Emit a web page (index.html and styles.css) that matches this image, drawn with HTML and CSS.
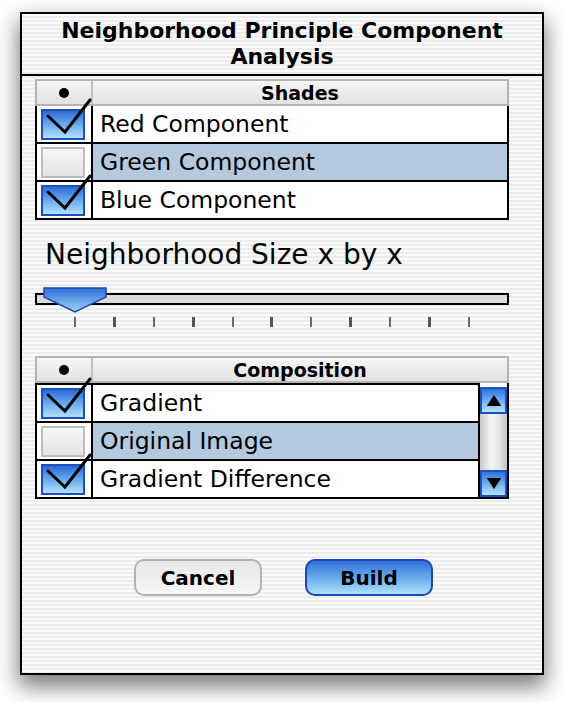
FILE: index.html
```html
<!DOCTYPE html>
<html>
<head>
<meta charset="utf-8">
<link rel="stylesheet" href="styles.css">
</head>
<body>
<div class="window">
  <div class="title">Neighborhood Principle Component<br>Analysis</div>
  <div class="content">
    <div class="table">
      <div class="thead">
        <div class="hcell c1"><span class="dot"></span></div>
        <div class="hcell c2">Shades</div>
      </div>
      <div class="row">
        <div class="cell c1"><span class="box on"></span><svg class="check" viewBox="0 0 50 40"><polyline points="6,17 23,33 48,1"/></svg></div>
        <div class="cell c2">Red Component</div>
      </div>
      <div class="row sel">
        <div class="cell c1"><span class="box"></span></div>
        <div class="cell c2">Green Component</div>
      </div>
      <div class="row">
        <div class="cell c1"><span class="box on"></span><svg class="check" viewBox="0 0 50 40"><polyline points="6,17 23,33 48,1"/></svg></div>
        <div class="cell c2">Blue Component</div>
      </div>
    </div>

    <div class="label">Neighborhood Size x by x</div>

    <div class="slider">
      <div class="track"></div>
      <svg class="thumb" viewBox="0 0 64 26"><defs><linearGradient id="tg" x1="0" y1="0" x2="0" y2="1"><stop offset="0" stop-color="#2f6fd8"/><stop offset="1" stop-color="#9fd4f8"/></linearGradient></defs><polygon points="1,1 63,1 63,10 32,25 1,10" fill="url(#tg)" stroke="#1d47b4" stroke-width="1.5"/></svg>
      <div class="ticks">
        <span></span><span></span><span></span><span></span><span></span><span></span><span></span><span></span><span></span><span></span><span></span>
      </div>
    </div>

    <div class="table t2">
      <div class="thead">
        <div class="hcell c1"><span class="dot"></span></div>
        <div class="hcell c2">Composition</div>
      </div>
      <div class="body2">
        <div class="rows">
          <div class="row">
            <div class="cell c1"><span class="box on"></span><svg class="check" viewBox="0 0 50 40"><polyline points="6,17 23,33 48,1"/></svg></div>
            <div class="cell c2">Gradient</div>
          </div>
          <div class="row sel">
            <div class="cell c1"><span class="box"></span></div>
            <div class="cell c2">Original Image</div>
          </div>
          <div class="row">
            <div class="cell c1"><span class="box on"></span><svg class="check" viewBox="0 0 50 40"><polyline points="6,17 23,33 48,1"/></svg></div>
            <div class="cell c2">Gradient Difference</div>
          </div>
        </div>
        <div class="scroll">
          <div class="arrow up"><svg viewBox="0 0 20 16"><polygon points="10,2 18,14 2,14"/></svg></div>
          <div class="strack"></div>
          <div class="arrow down"><svg viewBox="0 0 20 16"><polygon points="2,2 18,2 10,14"/></svg></div>
        </div>
      </div>
    </div>

    <div class="buttons">
      <div class="btn cancel">Cancel</div>
      <div class="btn build">Build</div>
    </div>
  </div>
</div>
</body>
</html>
```
FILE: styles.css
```css
html, body {
  margin: 0;
  padding: 0;
  background: #ffffff;
}
body {
  font-family: "DejaVu Sans", Verdana, sans-serif;
  color: #000;
  min-height: 702px;
  padding-top: 12px;
  box-sizing: border-box;
}
.window {
  margin: 0 0 0 20px;
  width: 520px;
  height: 659px;
  border: 2px solid #000;
  background: repeating-linear-gradient(to bottom, #fafafa 0px, #fafafa 2px, #ececec 2px, #ececec 4px);
  box-shadow: 0 10px 20px 2px rgba(0,0,0,0.5);
}
.title {
  border-bottom: 2px solid #000;
  text-align: center;
  font-weight: bold;
  font-size: 22px;
  line-height: 26px;
  padding-top: 4px;
  box-sizing: border-box;
  height: 62px;
}
.content {
  padding: 3px 0 0 13px;
}
.table {
  width: 474px;
  border: 2px solid #000;
  border-top: none;
  box-sizing: border-box;
}
.thead {
  display: flex;
  height: 27px;
  background: linear-gradient(#f6f6f6, #e2e2e2);
  border: 2px solid #b4b4b4;
  margin: 0 -2px;
  box-sizing: border-box;
}
.hcell {
  display: flex;
  align-items: center;
  justify-content: center;
  font-weight: bold;
  font-size: 19px;
}
.hcell.c1 {
  width: 54px;
  border-right: 2px solid #c0c0c0;
}
.hcell.c2 { flex: 1; }
.dot {
  width: 10px;
  height: 10px;
  border-radius: 50%;
  background: #000;
}
.row {
  display: flex;
  height: 38px;
  border-top: 2px solid #000;
  box-sizing: border-box;
  background: #fff;
}
.thead + .row { border-top: none; height: 36px; }
.cell {
  display: flex;
  align-items: center;
}
.cell.c1 {
  width: 54px;
  border-right: 2px solid #000;
  position: relative;
  justify-content: center;
}
.cell.c2 {
  flex: 1;
  font-size: 23.5px;
  padding-left: 7px;
}
.row.sel .c2 { background: #b4c8de; }
.box {
  width: 44px;
  height: 31px;
  box-sizing: border-box;
  border: 2px solid #bdbdbd;
  background: linear-gradient(#f6f6f6, #e4e4e4);
  margin-right: 2px;
}
.box.on {
  border-color: #1f4ec0;
  background: linear-gradient(#2d6bd8, #6fb0f0 55%, #b4e0fb);
}
.check {
  position: absolute;
  left: 5px;
  top: -7px;
  width: 50px;
  height: 40px;
  overflow: visible;
}
.check polyline {
  fill: none;
  stroke: #000;
  stroke-width: 3;
  stroke-linecap: round;
  stroke-linejoin: miter;
}
.label {
  font-size: 28px;
  margin: 16px 0 0 10px;
  line-height: 38px;
}
.slider {
  position: relative;
  width: 474px;
  height: 50px;
  margin-top: 13px;
}
.track {
  position: absolute;
  left: 0;
  top: 6px;
  width: 474px;
  height: 12px;
  box-sizing: border-box;
  border: 2px solid #000;
  background: #dcdcdc;
}
.thumb {
  position: absolute;
  left: 8px;
  top: 0;
  width: 64px;
  height: 26px;
}
.ticks {
  position: absolute;
  left: 39px;
  top: 30px;
  width: 396px;
  display: flex;
  justify-content: space-between;
}
.ticks span {
  width: 2px;
  height: 10px;
  background: #6a6a6a;
}
.ticks span:nth-child(even) { width: 3px; background: #555; }
.t2 { margin-top: 19px; }
.body2 {
  display: flex;
}
.rows { flex: 1; }
.scroll {
  width: 27px;
  display: flex;
  flex-direction: column;
  border-left: 2px solid #000;
  background: #fff;
  padding-top: 4px;
}
.arrow {
  height: 27px;
  box-sizing: border-box;
  border: 2px solid #1f4ec0;
  background: linear-gradient(#3272dc, #72b4f0 55%, #b4e2fb);
  display: flex;
  align-items: center;
  justify-content: center;
}
.arrow svg { width: 18px; height: 15px; }
.arrow polygon { fill: #000; }
.strack {
  flex: 1;
  background: linear-gradient(to right, #c8c8c8, #f4f4f4 40%, #e6e6e6 70%, #c4c4c4);
}
.buttons {
  display: flex;
  gap: 43px;
  margin: 60px 0 0 99px;
}
.btn {
  width: 128px;
  height: 37px;
  box-sizing: border-box;
  border-radius: 10px;
  display: flex;
  align-items: center;
  justify-content: center;
  font-weight: bold;
  font-size: 20px;
}
.cancel {
  border: 2px solid #b2b2b2;
  background: linear-gradient(#e8e8e8, #f6f6f6);
}
.build {
  border: 2px solid #1d46b4;
  background: linear-gradient(#2f6fd8, #74b6f0 60%, #aee0fa);
}
```
